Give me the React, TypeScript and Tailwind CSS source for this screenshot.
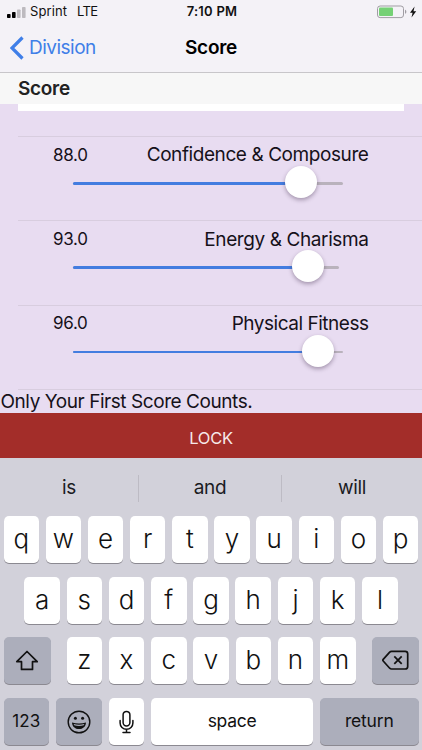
import { clsx } from 'clsx';
import type { ReactNode } from 'react';

/* ── Data ───────────────────────────────────────────────────────────────────── */

interface Criterion {
  label: string;
  score: number;
  trackWidth: number;
  thumb: number;
  labelClass: string;
}

const CRITERIA: Criterion[] = [
  { label: 'Confidence & Composure', score: 88, trackWidth: 270, thumb: 228, labelClass: 'tracking-[-0.42px]' },
  { label: 'Energy & Charisma', score: 93, trackWidth: 266, thumb: 235, labelClass: 'tracking-[-0.4px]' },
  { label: 'Physical Fitness', score: 96, trackWidth: 270, thumb: 245, labelClass: 'tracking-[-0.48px]' },
];

const SUGGESTIONS = ['is', 'and', 'will'];

/* ── Header ─────────────────────────────────────────────────────────────────── */

function StatusBar() {
  return (
    <div className="grid h-6 grid-cols-3 items-center pl-[7px] pr-[5px] text-[13px] text-[#111]">
      <div className="flex items-center">
        <svg width="19" height="11" viewBox="0 0 19 11" className="mr-[4px]">
          <rect x="0" y="7" width="3.6" height="4" rx="0.8" fill="#000" />
          <rect x="5" y="5" width="3.6" height="6" rx="0.8" fill="#000" />
          <rect x="10" y="2.5" width="3.6" height="8.5" rx="0.8" fill="#bdbabf" />
          <rect x="15" y="0" width="3.6" height="11" rx="0.8" fill="#bdbabf" />
        </svg>
        <span className="tracking-[0.1px]">Sprint</span>
        <span className="ml-[10px] tracking-[-0.7px]">LTE</span>
      </div>
      <span className="text-center font-semibold tracking-[0.25px]">7:10 PM</span>
      <svg width="40" height="14" viewBox="0 0 40 14" className="justify-self-end">
        <rect x="0.5" y="1" width="26" height="11.6" rx="2.6" fill="none" stroke="#a09da3" />
        <rect x="2" y="2.5" width="14" height="8.6" rx="1" fill="#75d175" />
        <path d="M28 4.8c1.8.5 1.8 3.5 0 4z" fill="#a09da3" />
        <path d="M37.6 1.6 33 7.7h2.6l-1.1 4.7 4.7-6.2h-2.7z" fill="#111" />
      </svg>
    </div>
  );
}

function NavBar() {
  return (
    <div className="grid h-12 grid-cols-3 items-center pl-[10px]">
      <button type="button" className="flex items-center text-[19px] text-[#3f7fe8]">
        <svg width="15" height="24" viewBox="0 0 15 24" className="mr-[4px]">
          <path d="M12.5 1.5 2 12l10.5 10.5" fill="none" stroke="currentColor" strokeWidth="3.2" />
        </svg>
        <span className="tracking-[-0.5px]">Division</span>
      </button>
      <h1 className="-ml-[10px] text-center text-[19px] font-semibold tracking-[-0.3px] text-black">Score</h1>
    </div>
  );
}

/* ── Score form ─────────────────────────────────────────────────────────────── */

function CriterionRow({ label, score, trackWidth, thumb, labelClass }: Criterion) {
  return (
    <div className="ml-[18px] h-[84.3px] border-t border-[#d8cddf] pl-[35px] pr-[53.5px] pt-[5px]">
      <div className="flex h-[27px] items-center justify-between text-[#16111a]">
        <span className="text-[17px] tracking-[-0.3px]">{score.toFixed(1)}</span>
        <span className={clsx('text-[19px]', labelClass)}>{label}</span>
      </div>
      <div
        className="relative ml-[20px] mt-[13px] h-[2.5px] rounded-full bg-[#b9b2bc]"
        style={{ width: trackWidth }}
      >
        <div className="h-full rounded-full bg-[#437de0]" style={{ width: thumb }} />
        <div
          className="absolute -top-[16px] size-8 -translate-x-1/2 rounded-full bg-white shadow-[0_2px_4px_rgba(60,40,70,0.4)]"
          style={{ left: thumb }}
        />
      </div>
    </div>
  );
}

/* ── Keyboard ───────────────────────────────────────────────────────────────── */

function Key({ children, className, dark }: { children: ReactNode; className?: string; dark?: boolean }) {
  return (
    <button
      type="button"
      className={clsx(
        'flex h-[47px] items-center justify-center rounded-[5px] text-[#111] shadow-[0_1px_0_#8b8991]',
        dark ? 'bg-[#acaebb]' : 'bg-white',
        className,
      )}
    >
      {children}
    </button>
  );
}

function Letters({ keys }: { keys: string }) {
  return keys.split('').map((letter) => (
    <Key key={letter} className="w-[35.5px] pb-[2px] text-[26px] font-[350]">
      {letter}
    </Key>
  ));
}

function ShiftIcon() {
  return (
    <svg width="24" height="22" viewBox="0 0 24 22" fill="none" stroke="#111" strokeWidth="1.7" strokeLinejoin="round">
      <path d="M12 1.5 1.8 11.7h4.7v7.7h11v-7.7h4.7z" />
    </svg>
  );
}

function DeleteIcon() {
  return (
    <svg width="27" height="21" viewBox="0 0 27 21" fill="none" stroke="#111" strokeWidth="1.7" strokeLinejoin="round">
      <path d="M9.5 1.3h13.7a2.5 2.5 0 0 1 2.5 2.5v12.7a2.5 2.5 0 0 1-2.5 2.5H9.5q-1 0-1.8-.8L1.2 11q-.7-.8 0-1.6l6.5-7.3q.8-.8 1.8-.8z" />
      <path d="m12.3 6.3 7.4 7.6m0-7.6-7.4 7.6" />
    </svg>
  );
}

function EmojiIcon() {
  return (
    <svg width="24" height="24" viewBox="0 0 24 24" fill="none" stroke="#111">
      <circle cx="12" cy="12" r="10.8" strokeWidth="1.4" />
      <circle cx="8.4" cy="8.3" r="1.5" fill="#111" stroke="none" />
      <circle cx="15.6" cy="8.3" r="1.5" fill="#111" stroke="none" />
      <path d="M5 12.4q7 2.2 14 0c-.2 4.1-3.1 6.6-7 6.6s-6.8-2.5-7-6.6z" fill="#111" stroke="none" />
      <path d="M6.7 14q5.3 1.5 10.6 0l-.5 1.300q-4.800 1.200-9.600 0z" fill="#acaebb" stroke="none" />
    </svg>
  );
}

function MicIcon() {
  return (
    <svg width="15" height="24" viewBox="0 0 15 24" fill="none" stroke="#111" strokeWidth="1.5" strokeLinecap="round">
      <rect x="4.1" y="1.4" width="6.8" height="14.5" rx="3.4" />
      <path d="M1.1 10.4v2.5a6.4 6.4 0 0 0 12.8 0v-2.5M7.5 19.3v3.2M4 22.6h7" />
    </svg>
  );
}

function Keyboard() {
  return (
    <div className="h-[292px] bg-[#d2d1da]">
      <div className="grid h-[58px] grid-cols-[139px_143px_1fr] items-center text-[19px] tracking-[-0.3px] text-[#1b1b1f]">
        {SUGGESTIONS.map((word, i) => (
          <div
            key={word}
            className={clsx(
              'mt-[3px] flex h-[27px] items-center justify-center',
              i < SUGGESTIONS.length - 1 && 'border-r border-[#bdbbc4]',
            )}
          >
            {word}
          </div>
        ))}
      </div>
      <div className="flex flex-col gap-[13.7px] px-[3.5px]">
        <div className="flex justify-between">
          <Letters keys="qwertyuiop" />
        </div>
        <div className="flex justify-between px-[20.8px]">
          <Letters keys="asdfghjkl" />
        </div>
        <div className="flex justify-between">
          <Key dark className="w-[47px]">
            <ShiftIcon />
          </Key>
          <div className="flex w-[289px] justify-between">
            <Letters keys="zxcvbnm" />
          </div>
          <Key dark className="w-[47px]">
            <DeleteIcon />
          </Key>
        </div>
        <div className="flex justify-between">
          <Key dark className="w-[45.5px] text-[17px]">
            123
          </Key>
          <Key dark className="w-[46px]">
            <EmojiIcon />
          </Key>
          <Key className="w-[35.5px]">
            <MicIcon />
          </Key>
          <Key className="w-[162.5px] text-[17.5px] tracking-[-0.3px]">space</Key>
          <Key dark className="w-[98.5px] text-[17.5px] tracking-[-0.2px]">
            return
          </Key>
        </div>
      </div>
    </div>
  );
}

/* ── App ────────────────────────────────────────────────────────────────────── */

export default function App() {
  return (
    <div className="flex h-[750px] w-[422px] flex-col overflow-hidden bg-[#e8dcf1] font-['Inter',sans-serif]">
      <header className="h-[73px] shrink-0 border-b border-[#c8c6ca] bg-[#f4f2f7]">
        <StatusBar />
        <NavBar />
      </header>
      <h2 className="h-[30.5px] shrink-0 bg-[#f7f7f7] pl-[18px] text-[19px] font-semibold leading-[31px] tracking-[-0.3px] text-[#222]">
        Score
      </h2>
      <main className="h-[309px] shrink-0">
        <div className="mx-[18px] mb-[25.5px] h-[7px] bg-white" />
        {CRITERIA.map((criterion) => (
          <CriterionRow key={criterion.label} {...criterion} />
        ))}
        <p className="ml-[18px] h-[23px] border-t border-[#d8cddf]">
          <span className="-ml-[18px] block pl-[0.5px] text-[19px] leading-[23px] tracking-[-0.44px] text-[#16111a]">
            Only Your First Score Counts.
          </span>
        </p>
      </main>
      <button
        type="button"
        className="h-[45.5px] shrink-0 bg-[#a32d29] pt-[6px] text-[16.5px] tracking-[-0.3px] text-[#f6e9ea]"
      >
        LOCK
      </button>
      <Keyboard />
    </div>
  );
}
